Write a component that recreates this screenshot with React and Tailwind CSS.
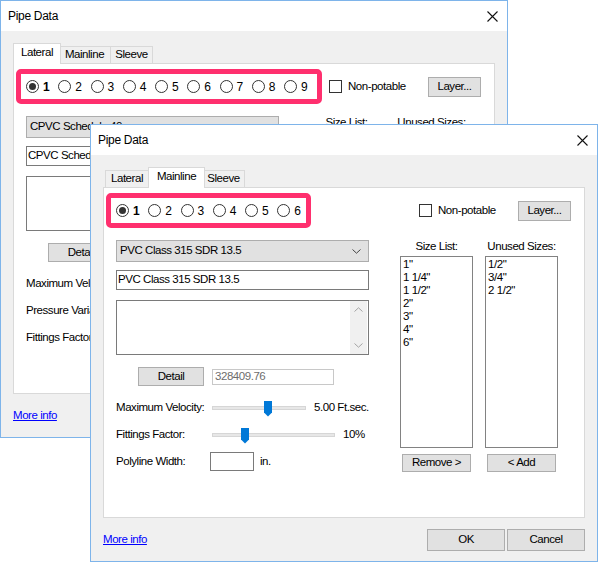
import React from "react";

const FONT = "font-['Liberation_Sans',Arial,sans-serif]";

const TABS = [
  { name: "Lateral", w: "w-[44px]", sel: "w-[48px]" },
  { name: "Mainline", w: "w-[53px]", sel: "w-[57px]" },
  { name: "Sleeve", w: "w-[43px]", sel: "w-[47px]" },
];

function CloseIcon() {
  return (
    <svg width="11" height="11" viewBox="0 0 11 11">
      <path d="M0.5 0.5L10.5 10.5M10.5 0.5L0.5 10.5" stroke="#111" strokeWidth="1.1" />
    </svg>
  );
}

function Chevron({ up, color = "#444" }) {
  return (
    <svg width="9" height="5" viewBox="0 0 9 5">
      <path d={up ? "M0.5 4.5L4.5 0.8L8.5 4.5" : "M0.5 0.5L4.5 4.2L8.5 0.5"} fill="none" stroke={color} strokeWidth="1" />
    </svg>
  );
}

function Radio({ n, checked }) {
  return (
    <div className="flex items-center w-[32.25px] shrink-0">
      <div className="w-[13px] h-[13px] rounded-full border border-[#333] bg-white flex items-center justify-center">
        {checked && <div className="w-[7px] h-[7px] rounded-full bg-[#333]" />}
      </div>
      <span className={"ml-[4px] text-[12px] " + (checked ? "font-bold" : "")}>{n}</span>
    </div>
  );
}

function Button({ children, className }) {
  return (
    <div className={"flex items-center justify-center bg-[#e1e1e1] border border-[#adadad] whitespace-nowrap " + className}>
      {children}
    </div>
  );
}

function Slider({ track, thumb, value }) {
  return (
    <div className="flex items-center">
      <div className="relative h-[4px] bg-[#e7e7e7] border border-[#d6d6d6]" style={{ width: track }}>
        <svg className="absolute top-[-6px]" style={{ left: thumb }} width="8" height="16" viewBox="0 0 8 16">
          <path d="M0 0H8V11.5L4 15.5L0 11.5Z" fill="#0078d7" />
        </svg>
      </div>
      <span className="ml-[8px] whitespace-nowrap">{value}</span>
    </div>
  );
}

function ListBox({ items }) {
  return (
    <div className="w-[73px] h-[192px] mt-[3px] border border-[#828282] bg-white pl-[2px] pt-px">
      {items.map((s) => (
        <div key={s} className="leading-[13px]">{s}</div>
      ))}
    </div>
  );
}

function PipeDialog({ tab, radios, pinkW, combo, rows, className }) {
  const sizes = ['1"', '1 1/4"', '1 1/2"', '2"', '3"', '4"', '6"'];
  const unused = ['1/2"', '3/4"', '2 1/2"'];
  return (
    <div className={"absolute w-[508px] h-[438px] border border-[#7eb4ea] bg-[#f0f0f0] flex flex-col text-black text-[11.5px] tracking-[-0.45px] " + FONT + " " + className}>
      <div className="h-[30px] bg-white flex items-center justify-between pl-[7px] pr-[9px]">
        <span className="text-[12px] tracking-[-0.3px]">Pipe Data</span>
        <CloseIcon />
      </div>

      <div className="mt-[12px] h-[20px] ml-[14px] flex items-end relative z-10">
        {TABS.map((t, i) => {
          const s = i === tab;
          return (
            <div
              key={t.name}
              className={
                "flex items-center justify-center border border-[#d9d9d9] " +
                (i > 0 ? "-ml-px " : "") +
                (s
                  ? t.sel + " h-[21px] -mb-px -mx-[2px] bg-white border-b-0 z-10 pb-[2px]"
                  : t.w + " h-[17px] bg-[#f0f0f0] border-b-0")
              }
            >
              {t.name}
            </div>
          );
        })}
      </div>

      <div className="mx-[12px] h-[331px] border border-[#d9d9d9] bg-white flex flex-col">
        <div className="flex items-center h-[35px] mt-[5px]">
          <div className="w-[315px] shrink-0 pl-[2px]">
            <div className={"h-[35px] rounded-[5px] border-[5px] border-[#ff2f6e] bg-white flex items-center pl-[5px] " + pinkW}>
              {Array.from({ length: radios }, (_, i) => (
                <Radio key={i} n={i + 1} checked={i === 0} />
              ))}
            </div>
          </div>
          <div className="flex items-center">
            <div className="w-[13px] h-[13px] border border-[#333] bg-white" />
            <span className="ml-[6px] whitespace-nowrap">Non-potable</span>
          </div>
          <Button className="ml-auto mr-[13px] w-[53px] h-[20px]">Layer...</Button>
        </div>

        <div className="flex mt-[12px]">
          <div className="ml-[12px] w-[253px] shrink-0 flex flex-col">
            <div className="h-[22px] bg-[#e1e1e1] border border-[#adadad] flex items-center justify-between pl-[3px] pr-[7px]">
              <span className="whitespace-nowrap">{combo}</span>
              <Chevron />
            </div>
            <div className="mt-[8px] h-[20px] border border-[#7a7a7a] flex items-center pl-[1px] whitespace-nowrap">{combo}</div>
            <div className="mt-[10px] h-[55px] border border-[#7a7a7a] flex justify-end">
              <div className="w-[17px] bg-[#f0f0f0] flex flex-col items-center justify-between py-[6px] mr-px">
                <Chevron up color="#a3a3a3" />
                <Chevron color="#a3a3a3" />
              </div>
            </div>
            <div className="mt-[12px] flex items-center">
              <Button className="ml-[22px] w-[66px] h-[19px]">Detail</Button>
              <div className="ml-[8px] w-[122px] h-[16px] border border-[#c8c8c8] flex items-center pl-[2px] text-[#6d6d6d]">
                328409.76
              </div>
            </div>
            <div className="mt-[8px] flex flex-col">
              {rows.map((r) => (
                <div key={r.label} className="h-[27px] flex items-center">
                  <span className="w-[96px] shrink-0 whitespace-nowrap">{r.label}</span>
                  {r.input ? (
                    <div className="flex items-center -ml-[2px]">
                      <div className="w-[44px] h-[19px] border border-[#7a7a7a] bg-white" />
                      <span className="ml-[6px]">in.</span>
                    </div>
                  ) : (
                    <Slider track={r.track} thumb={r.thumb} value={r.value} />
                  )}
                </div>
              ))}
            </div>
          </div>

          <div className="ml-[31px] flex gap-[12px]">
            <div className="flex flex-col">
              <span className="leading-[13px] text-center whitespace-nowrap">Size List:</span>
              <ListBox items={sizes} />
              <Button className="mt-[6px] ml-[2px] w-[69px] h-[18px]">Remove &gt;</Button>
            </div>
            <div className="flex flex-col">
              <span className="leading-[13px] text-center whitespace-nowrap">Unused Sizes:</span>
              <ListBox items={unused} />
              <Button className="mt-[6px] ml-[2px] w-[69px] h-[18px]">&lt; Add</Button>
            </div>
          </div>
        </div>
      </div>

      <div className="mt-[11px] ml-[12px] mr-[12px] flex items-center">
        <span className="text-[#0000ff] underline">More info</span>
        <Button className="ml-auto w-[78px] h-[22px]">OK</Button>
        <Button className="ml-[2px] w-[78px] h-[22px]">Cancel</Button>
      </div>
    </div>
  );
}

export default function App() {
  return (
    <div className="relative w-[598px] h-[562px] bg-white overflow-hidden">
      <PipeDialog
        className="left-0 top-0"
        tab={0}
        radios={9}
        pinkW="w-[306px]"
        combo="CPVC Schedule 40"
        rows={[
          { label: "Maximum Velocity:", track: 94, thumb: 51, value: "5.00 Ft.sec." },
          { label: "Pressure Variation:", track: 123, thumb: 40, value: "20%" },
          { label: "Fittings Factor:", track: 123, thumb: 28, value: "10%" },
        ]}
      />
      <PipeDialog
        className="left-[90px] top-[124px]"
        tab={1}
        radios={6}
        pinkW="w-[205px]"
        combo="PVC Class 315 SDR 13.5"
        rows={[
          { label: "Maximum Velocity:", track: 94, thumb: 51, value: "5.00 Ft.sec." },
          { label: "Fittings Factor:", track: 123, thumb: 28, value: "10%" },
          { label: "Polyline Width:", input: true },
        ]}
      />
    </div>
  );
}
